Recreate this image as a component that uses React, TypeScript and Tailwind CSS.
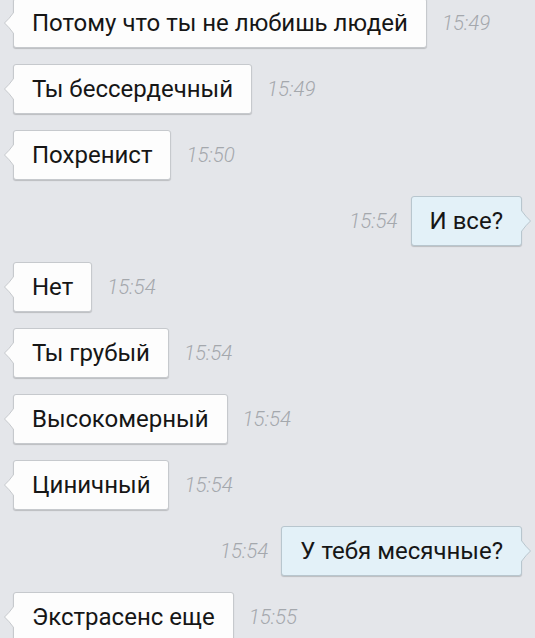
import React from "react";

type Msg = { text: string; time: string; out?: boolean };

const msgs: Msg[] = [
  { text: "Потому что ты не любишь людей", time: "15:49" },
  { text: "Ты бессердечный", time: "15:49" },
  { text: "Похренист", time: "15:50" },
  { text: "И все?", time: "15:54", out: true },
  { text: "Нет", time: "15:54" },
  { text: "Ты грубый", time: "15:54" },
  { text: "Высокомерный", time: "15:54" },
  { text: "Циничный", time: "15:54" },
  { text: "У тебя месячные?", time: "15:54", out: true },
  { text: "Экстрасенс еще", time: "15:55" },
];

function Tail({ out }: { out?: boolean }) {
  const fill = out ? "#e3f1f8" : "#fdfdfd";
  const stroke = out ? "#b8c6ce" : "#c6c9cd";
  if (out) {
    return (
      <svg
        width="11"
        height="22"
        viewBox="0 0 11 22"
        className="absolute right-[-11px] top-1/2 -translate-y-1/2"
      >
        <path d="M0 0 Q 5 7 9.5 11 Q 5 15 0 22" fill={fill} stroke={stroke} strokeWidth="1" />
      </svg>
    );
  }
  return (
    <svg
      width="11"
      height="22"
      viewBox="0 0 11 22"
      className="absolute left-[-11px] top-1/2 -translate-y-1/2"
    >
      <path d="M11 0 Q 6 7 1.5 11 Q 6 15 11 22" fill={fill} stroke={stroke} strokeWidth="1" />
    </svg>
  );
}

function Time({ t }: { t: string }) {
  return (
    <span
      className="text-[20.5px] font-light italic text-[#a4a8ad]"
      style={{ fontFamily: "Roboto, sans-serif" }}
    >
      {t}
    </span>
  );
}

function Row({ m }: { m: Msg }) {
  const bubble = (
    <div
      className={
        "relative h-[50px] flex items-center px-[18px] rounded-[3px] border shadow-[0_1px_1px_rgba(0,0,0,0.18)] " +
        (m.out ? "bg-[#e3f1f8] border-[#b8c6ce]" : "bg-[#fdfdfd] border-[#c6c9cd]")
      }
    >
      <span className="text-[24px] text-[#161616] whitespace-nowrap">{m.text}</span>
      <Tail out={m.out} />
    </div>
  );
  if (m.out) {
    return (
      <div className="flex items-center justify-end gap-[13px] pr-[13px]">
        <Time t={m.time} />
        {bubble}
      </div>
    );
  }
  return (
    <div className="flex items-center gap-[15px] pl-[13px]">
      {bubble}
      <Time t={m.time} />
    </div>
  );
}

export default function App() {
  return (
    <div
      className="w-[535px] h-[638px] overflow-hidden bg-[#e4e6ea]"
      style={{ fontFamily: "Roboto, 'Noto Sans', sans-serif" }}
    >
      <div className="flex flex-col gap-4 mt-[-2px]">
        {msgs.map((m, i) => (
          <Row key={i} m={m} />
        ))}
      </div>
    </div>
  );
}
